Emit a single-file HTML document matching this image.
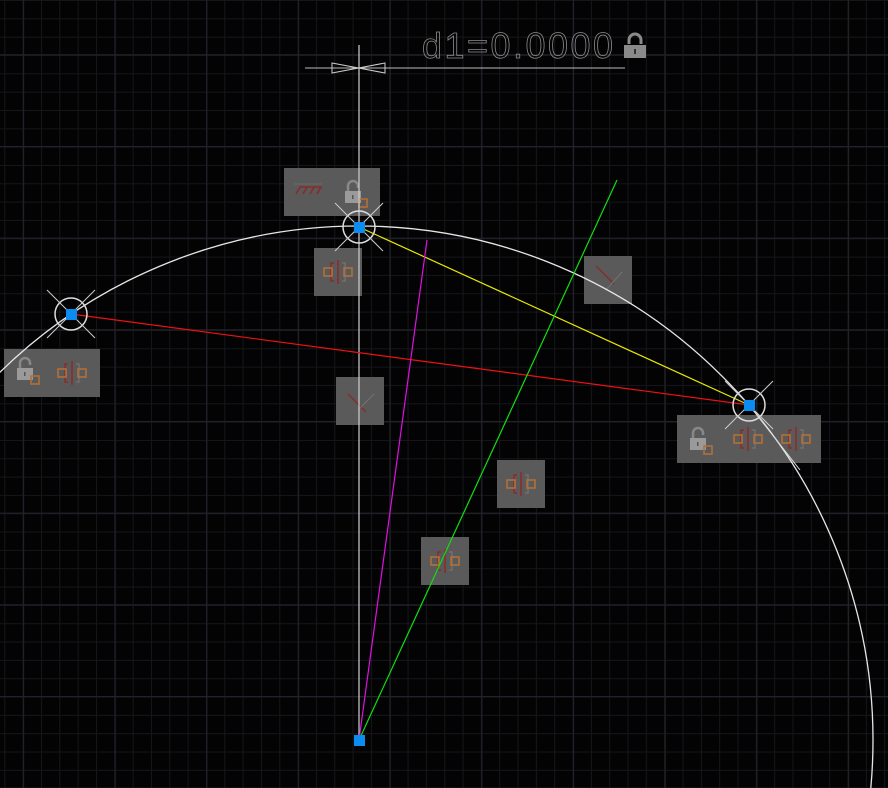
<!DOCTYPE html>
<html><head><meta charset="utf-8"><style>
html,body{margin:0;padding:0;background:#030304;width:888px;height:788px;overflow:hidden}
svg{display:block;position:absolute;left:0;top:0}
</style></head><body>
<svg width="888" height="788" viewBox="0 0 888 788" xmlns="http://www.w3.org/2000/svg">
<defs>
<pattern id="mn" x="4.3" y="0" width="18.33" height="18.33" patternUnits="userSpaceOnUse">
<path d="M0.5 0V18.33M0 0.5H18.33" stroke="#15161c" stroke-width="1" fill="none"/>
</pattern>
<pattern id="mj" x="22.9" y="-37.4" width="91.67" height="91.67" patternUnits="userSpaceOnUse">
<path d="M0.5 0V91.67M0 0.5H91.67" stroke="#22232a" stroke-width="1.3" fill="none"/>
</pattern>
<g id="sym">
<path d="M-4 -9H-7V9H-4M0 -12V12" stroke="#8a2a2a" stroke-width="1.5" fill="none"/>
<path d="M4 -9H7V9H4" stroke="#707070" stroke-width="1.5" fill="none"/>
<rect x="-14" y="-4" width="8" height="8" stroke="#b0703a" stroke-width="1.6" fill="none"/>
<rect x="6" y="-4" width="8" height="8" stroke="#b0703a" stroke-width="1.6" fill="none"/>
</g>
<g id="lock">
<path d="M-5 -2V-7A5 5 0 0 1 5 -7V-5" stroke="#888" stroke-width="2.5" fill="none"/>
<rect x="-8" y="-2" width="16" height="12" fill="#9a9a9a"/>
<rect x="-1" y="2" width="1.5" height="4" fill="#555"/>
<rect x="6" y="6" width="8" height="8" stroke="#b0703a" stroke-width="1.6" fill="none"/>
</g>
<g id="pt">
<circle r="16" stroke="#ddd" stroke-width="1.5" fill="none"/>
<path d="M-24 -24L24 24M-24 24L24 -24" stroke="#ccc" stroke-width="1"/>
</g>
</defs>
<rect width="888" height="788" fill="#030304"/>
<rect width="888" height="788" fill="url(#mn)"/>
<rect width="888" height="788" fill="url(#mj)"/>

<g fill="#5a5a5a">
<rect x="284" y="168" width="96" height="48"/>
<rect x="314" y="248" width="48" height="48"/>
<rect x="4" y="349" width="96" height="48"/>
<rect x="584" y="256" width="48" height="48"/>
<rect x="336" y="377" width="48" height="48"/>
<rect x="677" y="415" width="144" height="48"/>
<rect x="497" y="460" width="48" height="48"/>
<rect x="421" y="537" width="48" height="48"/>
</g>
<path d="M296 194L300 187H322M303 194L307 187M310 194L314 187M317 194L321 187" stroke="#8a2a2a" stroke-width="1.5" fill="none"/>
<path d="M294 184H322" stroke="#6a6a6a" stroke-width="1"/>
<use href="#lock" x="353" y="193"/>
<use href="#lock" x="25" y="370"/>
<use href="#lock" x="698" y="440"/>
<use href="#sym" x="338" y="272"/>
<use href="#sym" x="72" y="373"/>
<use href="#sym" x="748" y="439"/>
<use href="#sym" x="796" y="439"/>
<use href="#sym" x="521" y="484"/>
<use href="#sym" x="445" y="561"/>
<path d="M596 266L614 284" stroke="#8a2a2a" stroke-width="1.5"/><path d="M606 290L622 272" stroke="#707070" stroke-width="1.2"/>
<path d="M348 394L366 412" stroke="#8a2a2a" stroke-width="1.5"/><path d="M358 410L374 394" stroke="#707070" stroke-width="1.2"/>

<circle cx="359" cy="740" r="514" stroke="#e6e6e6" stroke-width="1.3" fill="none"/>
<line x1="359" y1="45" x2="359" y2="740" stroke="#cfcfcf" stroke-width="1.2"/>
<line x1="305" y1="68" x2="625" y2="68" stroke="#bbb" stroke-width="1"/>
<path d="M332 63L385 73V63L332 73Z" stroke="#ccc" stroke-width="1" fill="none"/>
<line x1="71" y1="314" x2="749" y2="405" stroke="#ee1111" stroke-width="1.2"/>
<line x1="359" y1="227" x2="749" y2="405" stroke="#e8e800" stroke-width="1.2"/>
<line x1="359" y1="740" x2="427" y2="240" stroke="#e010e0" stroke-width="1.2"/>
<line x1="359" y1="740" x2="617" y2="180" stroke="#10e010" stroke-width="1.2"/>
<line x1="749" y1="405" x2="800" y2="470" stroke="#ddd" stroke-width="1"/>

<text x="422" y="58" font-family="Liberation Sans, sans-serif" font-size="36" fill="none" stroke="#8c8c8c" stroke-width="0.8" textLength="191" lengthAdjust="spacing">d1=0.0000</text>
<g transform="translate(635,46)">
<path d="M-6 -2V-6A6 6 0 0 1 6 -6V-2" stroke="#8a8a8a" stroke-width="3" fill="none"/>
<rect x="-11" y="-1" width="22" height="13" fill="#8a8a8a"/>
<rect x="-1" y="3" width="2" height="5" fill="#333"/>
</g>

<use href="#pt" x="359" y="227"/>
<use href="#pt" x="71" y="314"/>
<use href="#pt" x="749" y="405"/>
<g fill="#0a8cf0">
<rect x="354" y="222" width="11" height="11"/>
<rect x="66" y="309" width="11" height="11"/>
<rect x="744" y="400" width="11" height="11"/>
<rect x="354" y="735" width="11" height="11"/>
</g>
</svg>
</body></html>
